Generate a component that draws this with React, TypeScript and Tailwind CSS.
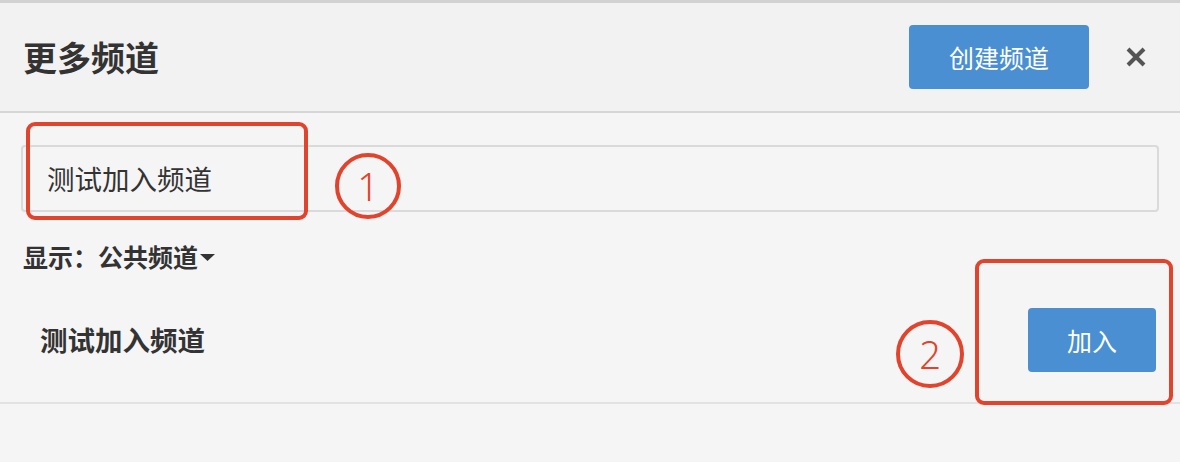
export default function App() {
  return (
    <div
      className="relative w-[1180px] h-[462px] overflow-hidden bg-[#f5f5f5] text-[#333]"
      style={{ fontFamily: '"Noto Sans CJK SC", "Noto Sans", sans-serif' }}
    >
      <div className="h-[3px] bg-[#d2d2d2]" />
      <div className="flex items-center justify-between h-[110px] pl-[23px] pr-[33px] bg-[#f2f2f2] border-b-2 border-[#d6d6d6]">
        <h1 className="text-[34px] font-semibold leading-none text-[#333]">更多频道</h1>
        <div className="flex items-center gap-[36px]">
          <button className="w-[180px] h-[64px] rounded-[4px] bg-[#4a8fd1] text-white text-[25px] leading-none">
            创建频道
          </button>
          <svg width="22" height="22" viewBox="0 0 22 22" className="text-[#555]">
            <path d="M3 3 L19 19 M19 3 L3 19" stroke="currentColor" strokeWidth="4" strokeLinecap="butt" />
          </svg>
        </div>
      </div>

      <div className="px-[21px] pt-[32px]">
        <div className="flex items-center h-[67px] border-2 border-[#dadada] rounded-[4px] pl-[24px] text-[27.5px] text-[#333]">
          测试加入频道
        </div>
        <div className="flex items-center mt-[24px] pl-[2px] h-[42px] text-[25px] font-semibold">
          <span>显示：</span>
          <span>公共频道</span>
          <svg width="15" height="10" viewBox="0 0 15 10" className="ml-[2px]">
            <path d="M0 2 L15 2 L7.5 9 Z" fill="#333" />
          </svg>
        </div>
      </div>

      <div className="flex items-center justify-between h-[126px] pl-[40px] pr-[24px] border-b-2 border-[#e2e2e2]">
        <span className="text-[27.5px] font-semibold">测试加入频道</span>
        <button className="w-[128px] h-[64px] rounded-[4px] bg-[#4a8fd1] text-white text-[25px] leading-none">
          加入
        </button>
      </div>

      {/* annotations */}
      <div className="absolute left-[26px] top-[122px] w-[282px] h-[98px] border-4 border-[#e2432c] rounded-[9px]" />
      <div
        className="absolute left-[335px] top-[153px] w-[66px] h-[66px] border-4 border-[#e2432c] rounded-full flex items-center justify-center text-[#e2432c] text-[38px] font-light leading-none"
        style={{ fontFamily: '"Noto Sans", sans-serif' }}
      >
        1
      </div>
      <div className="absolute left-[975px] top-[259px] w-[198px] h-[146px] border-4 border-[#e2432c] rounded-[9px]" />
      <div
        className="absolute left-[896px] top-[320px] w-[68px] h-[68px] border-4 border-[#e2432c] rounded-full flex items-center justify-center text-[#e2432c] text-[38px] font-light leading-none"
        style={{ fontFamily: '"Noto Sans", sans-serif' }}
      >
        2
      </div>
    </div>
  )
}
